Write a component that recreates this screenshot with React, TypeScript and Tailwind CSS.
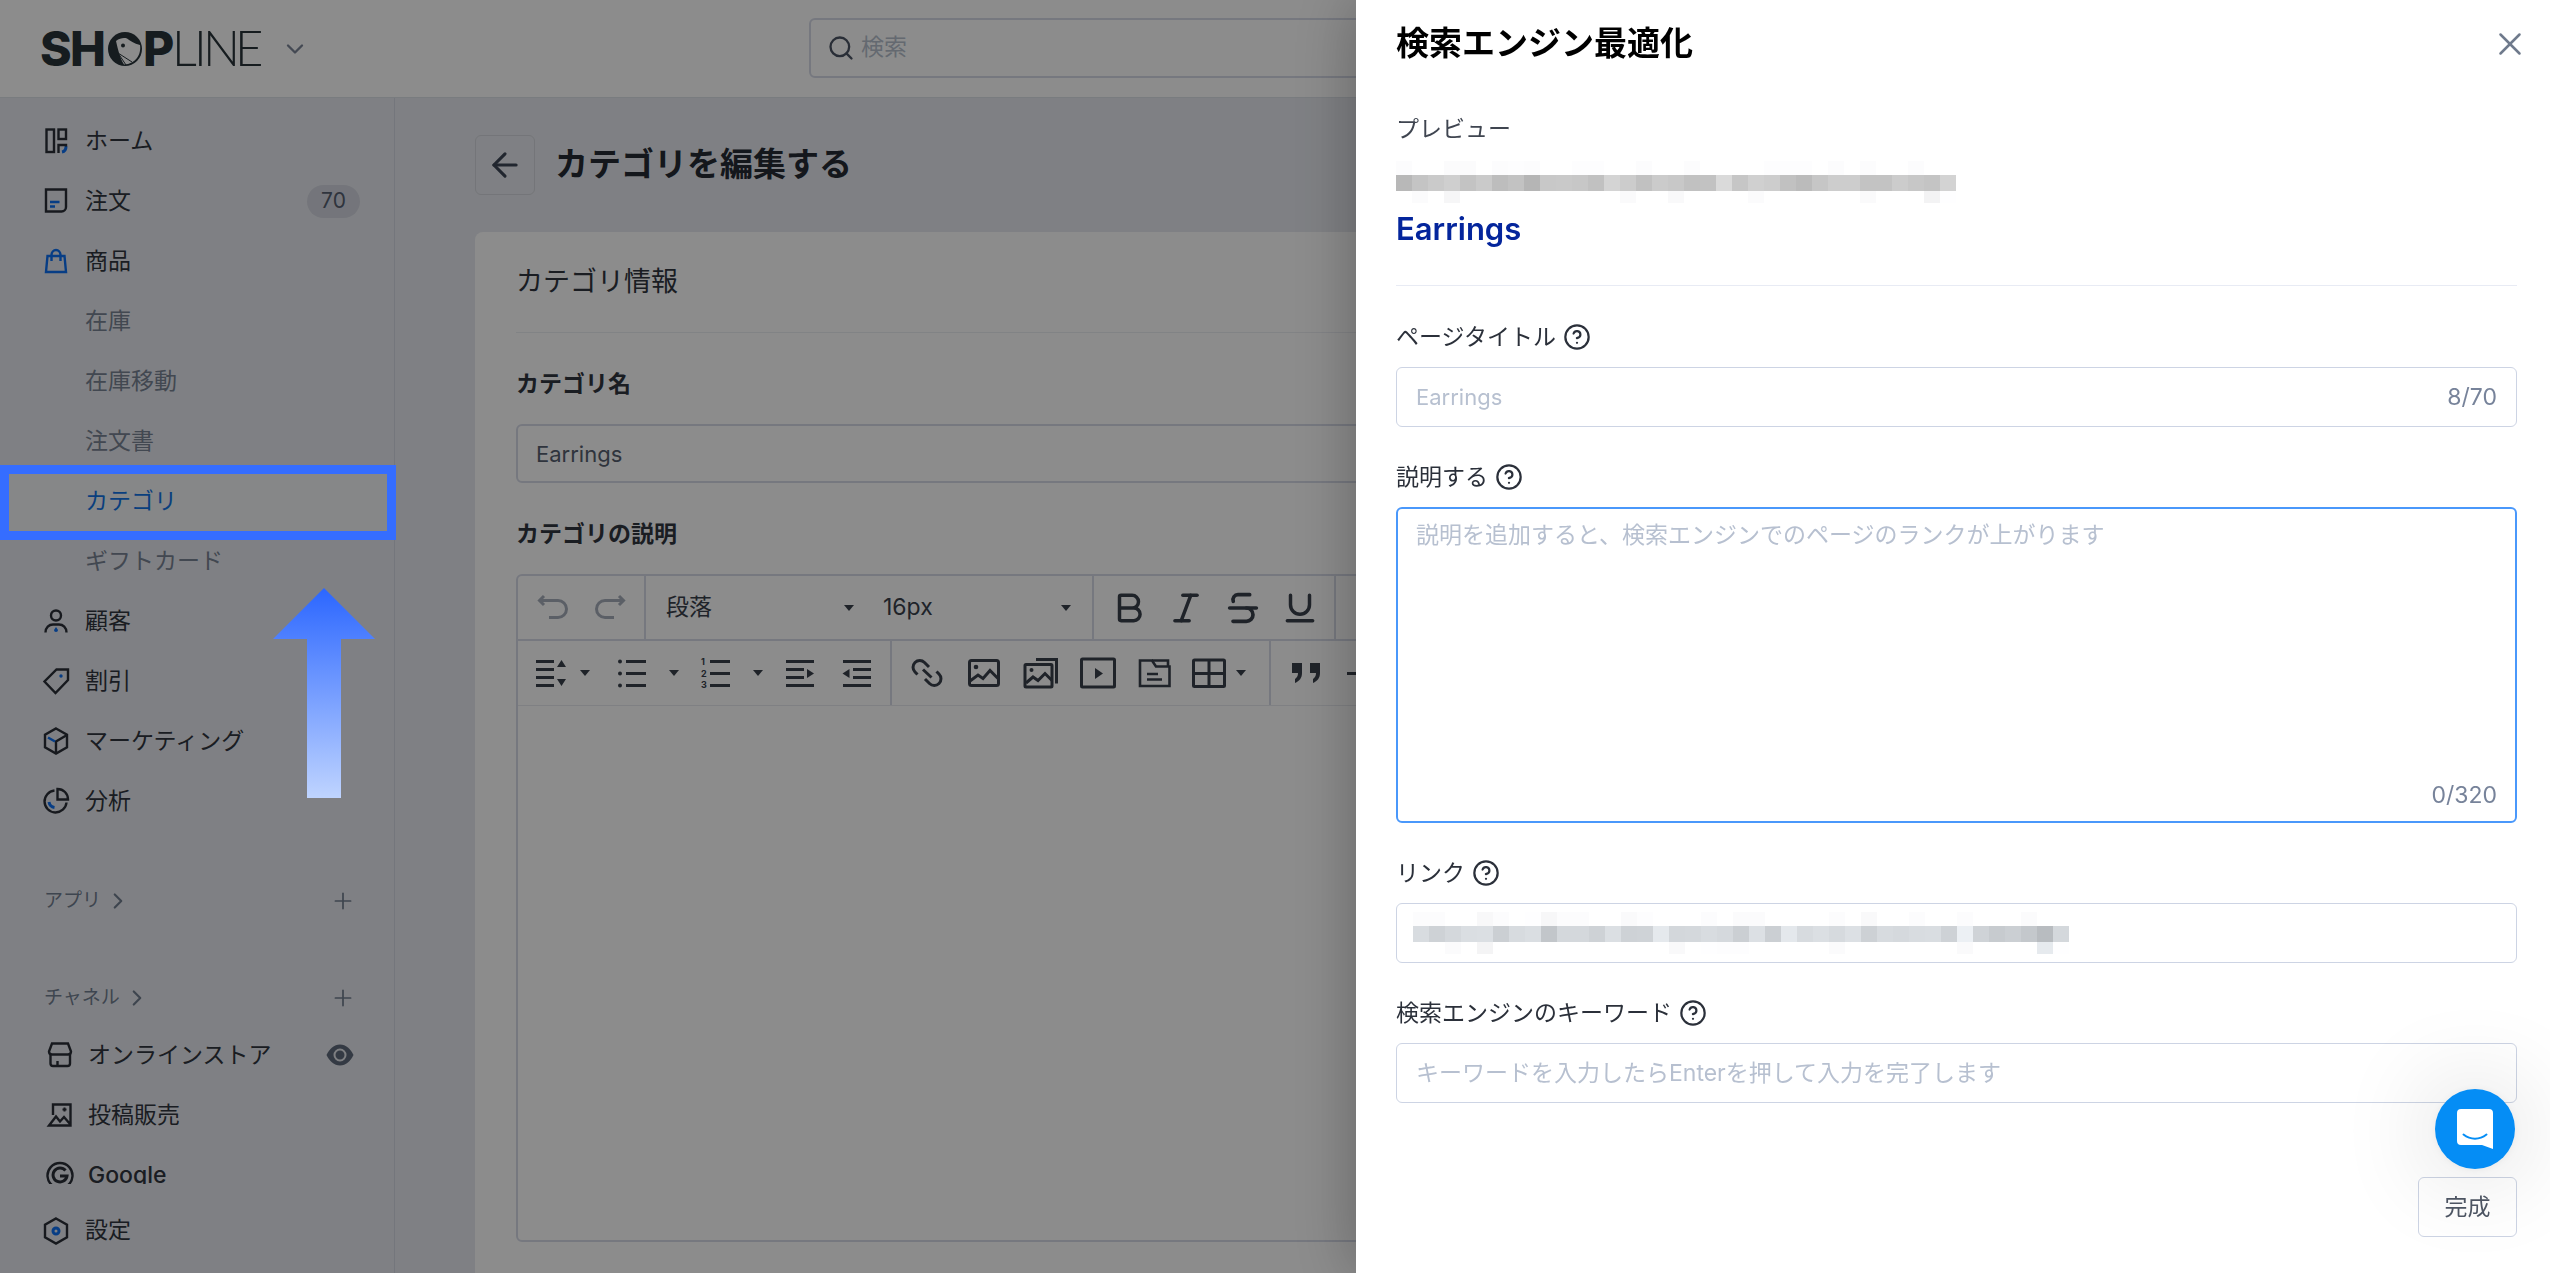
import { useState } from 'react';
import type { ReactNode } from 'react';
import {
  ArrowLeft,
  Bold,
  ChevronDown,
  ChevronRight,
  HelpCircle,
  Italic,
  Plus,
  Search,
  Strikethrough,
  Underline,
  X,
} from 'lucide-react';

const INK = '#2a2f38';
const BLUE = '#0d70f2';

/* ---------- Sidebar icons ---------- */

function NavSvg({ children, stroke = INK }: { children: ReactNode; stroke?: string }) {
  return (
    <svg width="28" height="28" viewBox="0 0 28 28" fill="none" stroke={stroke} strokeWidth="2.4" className="shrink-0">
      {children}
    </svg>
  );
}

const HomeIcon = () => (
  <NavSvg>
    <rect x="4.5" y="2.5" width="7.5" height="22.5" />
    <rect x="16.5" y="2.5" width="7.5" height="9.5" />
    <path d="M16.5 26v-8H24v2" />
    <path d="M24 19.5c0 3.5-1.5 5-4 5.5" stroke={BLUE} strokeWidth="3" />
  </NavSvg>
);

const OrderIcon = () => (
  <NavSvg>
    <path d="M4 2.5h20V20a4.5 4.5 0 0 1-4.5 4.5H4z" />
    <path d="M8 15h9.5M8 19.5h5" stroke={BLUE} />
  </NavSvg>
);

const BagIcon = () => (
  <NavSvg stroke={BLUE}>
    <path d="M5.5 9h17L24 25H4z" />
    <path d="M9.5 14V8a4.5 5 0 0 1 9 0v6" />
  </NavSvg>
);

const CustomerIcon = () => (
  <NavSvg>
    <circle cx="14" cy="8.5" r="5" />
    <path d="M3.5 25.5c0-5 3.5-8 7.5-8h6c4 0 7.5 3 7.5 8" />
    <path d="M14 20l2 3a2 2 0 1 1-4 0z" fill={BLUE} stroke="none" />
  </NavSvg>
);

const TagIcon = () => (
  <NavSvg>
    <path d="M14.5 2.5H26V13L13.5 26l-11-11.5z" />
    <circle cx="19" cy="9" r="1.7" fill={BLUE} stroke="none" />
  </NavSvg>
);

const CubeIcon = () => (
  <NavSvg>
    <path d="M14 1.5l11 6.2v12.6l-11 6.2-11-6.2V7.7z" />
    <path d="M14 26.5v-12L25 8" />
    <path d="M6 10.5l7 4" stroke={BLUE} />
  </NavSvg>
);

const ChartIcon = () => (
  <NavSvg>
    <path d="M12.5 3.5a11 11 0 1 0 12 12" />
    <path d="M15.5 2v10.5H26C26 6.5 21.5 2 15.5 2z" />
    <path d="M7 15c.5 3 2.5 5 5.5 5.5" stroke={BLUE} strokeWidth="3" />
  </NavSvg>
);

const SettingsIcon = () => (
  <NavSvg>
    <path d="M14 1.5l11 6.2v12.6l-11 6.2-11-6.2V7.7z" />
    <circle cx="14" cy="14" r="3" stroke={BLUE} strokeWidth="3" />
  </NavSvg>
);

const StoreIcon = () => (
  <NavSvg>
    <path d="M6 2.5h16l3 8c0 2-1.5 3-3 3H6c-1.500 0-3-1-3-3z" />
    <path d="M4.5 13v9.500a2.500 2.500 0 0 0 2.500 2.500h14.500a2.500 2.500 0 0 0 2.500-2.500V13M11.5 25v-5" />
  </NavSvg>
);

const PostIcon = () => (
  <NavSvg>
    <path d="M7 14V3.500h17.500v21H3l7-9 4 5 4-4.500 6 7" />
    <path d="M18.5 6.500v4M16.500 8.500h4" strokeWidth="2" />
  </NavSvg>
);

const GoogleIcon = () => (
  <NavSvg>
    <path d="M6.5 24.5a12.5 12.5 0 1 1 15 0" />
    <path d="M19.5 9.5a7 7 0 1 0 1.5 5.5h-7" strokeWidth="3" />
  </NavSvg>
);

const EyeIcon = () => (
  <svg width="28" height="22" viewBox="0 0 28 22">
    <path d="M14 .5c6 0 10.5 4.5 13.5 10.5C24.5 17 20 21.5 14 21.5S3.500 17 .5 11C3.500 5 8 .5 14 .5z" fill="#606b7c" />
    <circle cx="14" cy="11" r="5.5" fill="none" stroke="#e6e8ed" strokeWidth="2" />
  </svg>
);

/* ---------- Editor icons ---------- */

function ToolSvg({ children }: { children: ReactNode }) {
  return (
    <svg width="36" height="32" viewBox="0 0 36 32" fill="none" stroke="currentColor" strokeWidth="3" className="shrink-0">
      {children}
    </svg>
  );
}

const UndoIcon = () => (
  <ToolSvg>
    <path d="M9 4 4.5 8.5 9 13M5 8.5h18a8.5 8.5 0 0 1 0 17h-9" />
  </ToolSvg>
);

const RedoIcon = () => (
  <ToolSvg>
    <path d="M27 4l4.5 4.5L27 13M31 8.5H13a8.5 8.5 0 0 0 0 17h9" />
  </ToolSvg>
);

const LineHeightIcon = () => (
  <ToolSvg>
    <path d="M3 4.5h18M3 12.5h18M3 20.5h18M3 28.5h18" />
    <path d="M24 10h9l-4.5-7zM24 22h9l-4.5 7z" fill="currentColor" stroke="none" />
  </ToolSvg>
);

const BulletIcon = () => (
  <ToolSvg>
    <path d="M12 4.5h20M12 16.5h20M12 28.5h20" />
    <g fill="currentColor" stroke="none">
      <circle cx="6" cy="4.5" r="2" />
      <circle cx="6" cy="16.5" r="2" />
      <circle cx="6" cy="28.5" r="2" />
    </g>
  </ToolSvg>
);

const NumberedIcon = () => (
  <ToolSvg>
    <path d="M12 4.5h20M12 16.5h20M12 28.5h20" />
    <g fill="currentColor" stroke="none" fontSize="9" fontWeight="700">
      <text x="3" y="8">1</text>
      <text x="3" y="20">2</text>
      <text x="3" y="31">3</text>
    </g>
  </ToolSvg>
);

const IndentIcon = () => (
  <ToolSvg>
    <path d="M4 4.5h28M4 12.5h18M4 20.5h18M4 28.5h28" />
    <path d="M25 12v9l7-4.5z" fill="currentColor" stroke="none" />
  </ToolSvg>
);

const OutdentIcon = () => (
  <ToolSvg>
    <path d="M4 4.5h28M14 12.5h18M14 20.5h18M4 28.5h28" />
    <path d="M10.5 12v9l-7-4.5z" fill="currentColor" stroke="none" />
  </ToolSvg>
);

const LinkIcon = () => (
  <ToolSvg>
    <path d="M8.5 17.5 6 15a6.5 6.5 0 0 1 9.5-9.5L20 10M14 12.5l8.5 8M27.5 14.5 30 17a6.5 6.5 0 0 1-9.5 9.5L16 22" />
  </ToolSvg>
);

const ImageIcon = () => (
  <ToolSvg>
    <rect x="3.5" y="3.5" width="29" height="25" rx="2" />
    <path d="M4 24l8-6 5 3.5 7-8 8 8" />
    <circle cx="10" cy="10" r="2.3" fill="currentColor" stroke="none" />
  </ToolSvg>
);

const GalleryIcon = () => (
  <ToolSvg>
    <rect x="2" y="7.5" width="27" height="22.5" rx="1" />
    <path d="M3 26l7-6 5 3.5 7-7 7 7M13 2.5h20.5v24" />
    <circle cx="8.5" cy="13" r="2" fill="currentColor" stroke="none" />
  </ToolSvg>
);

const VideoIcon = () => (
  <ToolSvg>
    <rect x="1.5" y="2" width="33" height="28" rx="1" />
    <path d="M15 11v11l8-5.5z" fill="currentColor" stroke="none" />
  </ToolSvg>
);

const DocIcon = () => (
  <ToolSvg>
    <path d="M3 3.500h12l4 6h13.500V29H3z" strokeWidth="2.600" />
    <path d="M15 3.500h16V9M10 17h11M10 22.500h15" strokeWidth="2.600" />
  </ToolSvg>
);

const TableIcon = () => (
  <ToolSvg>
    <rect x="2.5" y="3" width="31" height="26.5" rx="1" />
    <path d="M18 3v27M2.5 16.5h31" />
  </ToolSvg>
);

const QuoteIcon = () => (
  <ToolSvg>
    <path
      d="M4 6h10v10c0 5-2.5 8-7 10v-4c2-1.5 3-3 3-6H4zM22 6h10v10c0 5-2.5 8-7 10v-4c2-1.5 3-3 3-6h-6z"
      fill="currentColor"
      stroke="none"
    />
  </ToolSvg>
);

const MinusIcon = () => (
  <ToolSvg>
    <path d="M2 16.5h32" />
  </ToolSvg>
);

const Caret = () => (
  <svg width="10" height="6" viewBox="0 0 10 6" className="shrink-0">
    <path d="M0 0h10L5 6z" fill="#3a414c" />
  </svg>
);

function Tool({ label, children, size = 'w-[57px]' }: { label: string; children: ReactNode; size?: string }) {
  return (
    <button type="button" aria-label={label} className={`${size} h-full flex items-center justify-center`}>
      {children}
    </button>
  );
}

/* ---------- Data ---------- */

interface NavEntry {
  name: string;
  icon?: () => ReactNode;
  badge?: string;
  active?: boolean;
}

const navEntries: NavEntry[] = [
  { name: 'ホーム', icon: HomeIcon },
  { name: '注文', icon: OrderIcon, badge: '70' },
  { name: '商品', icon: BagIcon },
  { name: '在庫' },
  { name: '在庫移動' },
  { name: '注文書' },
  { name: 'カテゴリ', active: true },
  { name: 'ギフトカード' },
  { name: '顧客', icon: CustomerIcon },
  { name: '割引', icon: TagIcon },
  { name: 'マーケティング', icon: CubeIcon },
  { name: '分析', icon: ChartIcon },
];

const channels = [
  { name: 'オンラインストア', icon: StoreIcon, eye: true },
  { name: '投稿販売', icon: PostIcon },
  { name: 'Google', icon: GoogleIcon, latin: true },
];

// Gray levels of the pixelated texts, one cell each: top, middle and bottom strip
const previewCells = {
  top: [252, 255, 255, 251, 251, 255, 252, 253, 252, 255, 255, 253, 253, 255, 255, 252, 255, 255, 252, 255, 255, 255, 255, 253, 253, 253, 255, 252, 255, 252, 255, 255, 252, 255, 255],
  mid: [184, 196, 202, 207, 195, 202, 189, 194, 181, 200, 201, 199, 193, 212, 204, 193, 203, 200, 193, 194, 218, 198, 208, 205, 193, 187, 198, 205, 205, 195, 195, 204, 199, 196, 211],
  bottom: [255, 251, 255, 246, 255, 255, 255, 255, 255, 255, 255, 255, 255, 255, 250, 255, 255, 249, 255, 255, 255, 255, 251, 255, 255, 255, 255, 255, 255, 250, 255, 255, 255, 243, 254],
};

const linkCells = {
  top: [252, 252, 255, 255, 248, 252, 255, 254, 247, 252, 252, 255, 255, 250, 253, 255, 255, 255, 252, 255, 251, 251, 255, 255, 255, 255, 252, 255, 249, 255, 255, 252, 255, 255, 252, 255, 255, 255, 251, 255, 255],
  mid: [216, 206, 212, 218, 219, 203, 215, 218, 194, 212, 212, 206, 219, 206, 207, 229, 211, 212, 216, 213, 203, 220, 203, 228, 215, 219, 214, 220, 205, 215, 213, 216, 217, 206, 236, 207, 199, 203, 196, 184, 212],
  bottom: [255, 255, 251, 255, 244, 255, 255, 255, 255, 255, 255, 255, 255, 255, 255, 255, 249, 255, 254, 253, 253, 255, 255, 255, 255, 255, 251, 255, 255, 255, 255, 255, 255, 255, 250, 255, 255, 255, 255, 230, 254],
};

function Mosaic({ cells, tint = 0 }: { cells: { top: number[]; mid: number[]; bottom: number[] }; tint?: number }) {
  const strips = [
    { values: cells.top, y: 0, height: 14 },
    { values: cells.mid, y: 14, height: 16 },
    { values: cells.bottom, y: 30, height: 12 },
  ];
  return (
    <svg width={cells.mid.length * 16} height="42" shapeRendering="crispEdges" aria-hidden="true">
      {strips.map((strip) =>
        strip.values.map((v, i) => (
          <rect
            key={`${strip.y}-${i}`}
            x={i * 16}
            y={strip.y}
            width="16"
            height={strip.height}
            fill={`rgb(${v}, ${Math.min(255, v + (v < 240 ? tint / 2 : 0))}, ${Math.min(255, v + (v < 240 ? tint : 1))})`}
          />
        ))
      )}
    </svg>
  );
}

/* ---------- Page parts ---------- */

function Logo() {
  return (
    <svg width="232" height="80" viewBox="-4 -18 232 80" role="img" aria-label="SHOPLINE" fill="#28343a">
      <g fontFamily="Inter" fontSize="48" fontWeight="800">
        <text x="-1" y="39">S</text>
        <text x="29" y="39">H</text>
        <text x="102" y="39">P</text>
      </g>
      <g fontFamily="Lato" fontSize="49" fontWeight="300">
        <text x="131" y="39">L</text>
        <text x="153" y="39">I</text>
        <text x="162" y="39">N</text>
        <text x="194" y="39">E</text>
      </g>
      <circle cx="84" cy="22" r="17" />
      <path d="M75 14c4-3 8-3.5 11-2.5 3 2 7 5 13 6.5 1.5 9-4 19-16 19.5-4-6-6-15-8-23.5z" fill="#fff" />
      <circle cx="82" cy="18.5" r="2" />
      <path d="M77 26l14 9M77 26l8 12M78 29l3 9" stroke="#28343a" strokeWidth="1" />
    </svg>
  );
}

function Header() {
  return (
    <header className="h-[98px] shrink-0 grid grid-cols-[1fr_932px_1fr] items-center bg-white border-b border-[#dde2e8]">
      <button type="button" className="pl-[37px] flex items-center gap-3">
        <Logo />
        <ChevronDown size={28} strokeWidth={2} className="text-[#7c8698]" />
      </button>
      <label className="h-[60px] mb-0.5 px-4 flex items-center gap-1.5 rounded-md border-2 border-[#d7dbe8]">
        <Search size={28} strokeWidth={2} className="text-[#4c5565]" />
        <input
          type="search"
          placeholder="検索"
          aria-label="検索"
          className="flex-1 text-[23px] outline-none placeholder:text-[#b7bfcd]"
        />
      </label>
    </header>
  );
}

function SectionHeading({ name }: { name: string }) {
  return (
    <div className="mt-[43px] h-[54px] pl-11 pr-[38px] flex items-center justify-between text-[#727e90]">
      <a href="#" className="flex items-center gap-1 text-[19px]">
        {name}
        <ChevronRight size={26} strokeWidth={2} />
      </a>
      <button type="button" aria-label={`${name}を追加`}>
        <Plus size={26} strokeWidth={1.6} />
      </button>
    </div>
  );
}

function Sidebar() {
  return (
    <aside className="w-[395px] shrink-0 flex flex-col border-r border-[#d3d8e2] text-[23px] text-[#31363f]">
      <nav className="flex-1 min-h-0 pt-[13px] overflow-hidden">
        {navEntries.map((entry) => (
          <a
            key={entry.name}
            href="#"
            className={`h-[60px] pr-[34px] flex items-center ${entry.icon ? 'pl-[42px] gap-[15px]' : 'pl-[85px]'} ${
              entry.active ? 'bg-[#f4f6f7] text-[#1273e6]' : entry.icon ? '' : 'text-[#788394]'
            }`}
          >
            {entry.icon && <entry.icon />}
            {entry.name}
            {entry.badge && (
              <span className="ml-auto w-[53px] h-[33px] rounded-full bg-[#d3d6e0] text-[#566070] text-[21px] flex items-center justify-center">
                {entry.badge}
              </span>
            )}
          </a>
        ))}
        <SectionHeading name="アプリ" />
        <SectionHeading name="チャネル" />
        {channels.map((channel) => (
          <a key={channel.name} href="#" className="h-[60px] pl-[46px] pr-10 flex items-center gap-[14px]">
            <channel.icon />
            <span className={channel.latin ? 'font-medium' : ''}>{channel.name}</span>
            {channel.eye && (
              <span className="ml-auto">
                <EyeIcon />
              </span>
            )}
          </a>
        ))}
      </nav>
      <a href="#" className="h-[89px] pt-1 pl-[42px] flex items-center gap-[15px]">
        <SettingsIcon />
        設定
      </a>
    </aside>
  );
}

function Editor() {
  return (
    <div className="flex flex-col h-[668px] rounded-md border-2 border-[#d7dbe8] text-[#3a414c]">
      <div className="h-[65px] shrink-0 flex border-b-2 border-[#d7dbe8] overflow-hidden">
        <div className="w-32 shrink-0 flex justify-center border-r-2 border-[#d7dbe8] text-[#a7aebb]">
          <Tool label="元に戻す"><UndoIcon /></Tool>
          <Tool label="やり直す"><RedoIcon /></Tool>
        </div>
        <div className="pr-[21px] shrink-0 flex gap-[9px] border-r-2 border-[#d7dbe8] text-[23px]">
          <div className="w-[208px] pl-5 flex items-center">
            <select aria-label="書式" className="flex-1 appearance-none outline-none">
              <option>段落</option>
            </select>
            <Caret />
          </div>
          <div className="w-[208px] pl-5 flex items-center">
            <select aria-label="文字サイズ" className="flex-1 appearance-none outline-none">
              <option>16px</option>
            </select>
            <Caret />
          </div>
        </div>
        <div className="px-1.5 shrink-0 flex border-r-2 border-[#d7dbe8]">
          <Tool label="太字"><Bold size={38} strokeWidth={2.2} /></Tool>
          <Tool label="斜体"><Italic size={38} strokeWidth={2.2} /></Tool>
          <Tool label="取り消し線"><Strikethrough size={40} strokeWidth={2.2} /></Tool>
          <Tool label="下線"><Underline size={38} strokeWidth={2.2} /></Tool>
        </div>
      </div>
      <div className="h-[65px] shrink-0 flex border-b border-[#e8eaef] overflow-hidden">
        <div className="pl-[5px] pr-[5px] shrink-0 flex border-r-2 border-[#d7dbe8]">
          <Tool label="行の高さ" size="w-[56px]"><LineHeightIcon /></Tool>
          <Tool label="行の高さを選択" size="w-3 mr-3"><Caret /></Tool>
          <Tool label="箇条書き"><BulletIcon /></Tool>
          <Tool label="箇条書きを選択" size="w-[27px]"><Caret /></Tool>
          <Tool label="番号付き"><NumberedIcon /></Tool>
          <Tool label="番号付きを選択" size="w-[27px]"><Caret /></Tool>
          <Tool label="インデント"><IndentIcon /></Tool>
          <Tool label="インデント解除"><OutdentIcon /></Tool>
        </div>
        <div className="pl-1.5 pr-[22px] shrink-0 flex border-r-2 border-[#d7dbe8]">
          <Tool label="リンク"><LinkIcon /></Tool>
          <Tool label="画像"><ImageIcon /></Tool>
          <Tool label="ギャラリー"><GalleryIcon /></Tool>
          <Tool label="動画"><VideoIcon /></Tool>
          <Tool label="ファイル"><DocIcon /></Tool>
          <Tool label="表" size="w-[52px]"><TableIcon /></Tool>
          <Tool label="表を選択" size="w-3"><Caret /></Tool>
        </div>
        <div className="pl-1.5 shrink-0 flex">
          <Tool label="引用"><QuoteIcon /></Tool>
          <Tool label="区切り線"><MinusIcon /></Tool>
        </div>
      </div>
      <textarea aria-labelledby="category-body" className="flex-1 p-5 resize-none outline-none text-[23px]" />
    </div>
  );
}

function CategoryPage() {
  const [name, setName] = useState('Earrings');

  return (
    <main className="flex-1 min-w-0 px-20 pt-[37px] overflow-hidden">
      <div className="flex items-center gap-5">
        <button
          type="button"
          aria-label="戻る"
          className="w-[60px] h-[60px] flex items-center justify-center rounded-md border border-[#d3d6dc] text-[#3d4656]"
        >
          <ArrowLeft size={38} strokeWidth={2} />
        </button>
        <h1 className="text-[33px] font-bold text-[#262b33]">カテゴリを編集する</h1>
      </div>

      <section className="mt-[37px] px-[41px] pb-[60px] rounded-lg bg-white">
        <h2 className="h-[101px] flex items-center border-b border-[#eceef3] text-[27px] text-[#31363f]">カテゴリ情報</h2>
        <label htmlFor="category-name" className="mt-[35px] block text-[23px] leading-8 font-bold text-[#31363f]">
          カテゴリ名
        </label>
        <input
          id="category-name"
          value={name}
          onChange={(e) => setName(e.target.value)}
          className="mt-6 w-full h-[59px] px-[18px] rounded-md border-2 border-[#d7dbe8] text-[22px] text-[#566070] outline-none"
        />
        <h3 id="category-body" className="mt-[35px] mb-6 text-[23px] leading-8 font-bold text-[#31363f]">
          カテゴリの説明
        </h3>
        <Editor />
      </section>
    </main>
  );
}

function FieldLabel({ htmlFor, children }: { htmlFor: string; children: ReactNode }) {
  return (
    <label htmlFor={htmlFor} className="mb-[14px] h-8 flex items-center gap-[7px] text-[23px] text-[#2b303a]">
      {children}
      <HelpCircle size={28} strokeWidth={1.9} />
    </label>
  );
}

function SeoDrawer() {
  const [title, setTitle] = useState('');
  const [description, setDescription] = useState('');

  return (
    <div
      role="dialog"
      aria-labelledby="seo-title"
      className="fixed inset-y-0 right-0 z-30 w-[1194px] max-w-full pl-10 pr-[33px] pb-9 flex flex-col bg-white shadow-[0_0_60px_rgba(0,0,0,0.3)] text-[23px]"
    >
      <div className="h-[88px] shrink-0 flex items-center justify-between">
        <h2 id="seo-title" className="text-[33px] font-bold text-black">検索エンジン最適化</h2>
        <button type="button" aria-label="閉じる" className="-mr-3 text-[#6f7a8c]">
          <X size={38} strokeWidth={1.6} />
        </button>
      </div>

      <div className="pt-[25px] pb-8 border-b border-[#e8ebf4]">
        <p className="mb-4 leading-8 text-[#3f4550]">プレビュー</p>
        <Mosaic cells={previewCells} />
        <p className="mt-0.5 text-[31px] leading-[48px] font-semibold text-[#04259c]">Earrings</p>
      </div>

      <div className="pt-[35px] flex flex-col gap-[34px]">
        <div>
          <FieldLabel htmlFor="page-title">ページタイトル</FieldLabel>
          <div className="h-[60px] px-[19px] flex items-center rounded-md border border-[#cdd4e4]">
            <input
              id="page-title"
              value={title}
              onChange={(e) => setTitle(e.target.value)}
              placeholder="Earrings"
              className="flex-1 text-[22px] outline-none placeholder:text-[#b7c0d0]"
            />
            <span className="text-[#77839a]">8/70</span>
          </div>
        </div>
        <div>
          <FieldLabel htmlFor="description">説明する</FieldLabel>
          <div className="h-[316px] px-[18px] py-2.5 flex flex-col rounded-md border-2 border-[#4a98fb]">
            <textarea
              id="description"
              value={description}
              onChange={(e) => setDescription(e.target.value)}
              placeholder="説明を追加すると、検索エンジンでのページのランクが上がります"
              className="flex-1 resize-none leading-8 outline-none placeholder:text-[#b7c0d0]"
            />
            <span className="self-end leading-8 text-[#77839a]">{description.length}/320</span>
          </div>
        </div>
        <div>
          <FieldLabel htmlFor="link">リンク</FieldLabel>
          <div className="h-[60px] px-4 flex items-center rounded-md border border-[#cdd4e4]">
            <Mosaic cells={linkCells} tint={8} />
            <input id="link" className="flex-1 outline-none" />
          </div>
        </div>
        <div>
          <FieldLabel htmlFor="keywords">検索エンジンのキーワード</FieldLabel>
          <input
            id="keywords"
            placeholder="キーワードを入力したらEnterを押して入力を完了します"
            className="w-full h-[60px] px-[19px] rounded-md border border-[#cdd4e4] outline-none placeholder:text-[#b7c0d0]"
          />
        </div>
      </div>

      <button
        type="button"
        className="mt-auto self-end w-[99px] h-[60px] shrink-0 rounded-md border border-[#cdd4e4] text-[#4f5765]"
      >
        完成
      </button>
    </div>
  );
}

function ChatButton() {
  return (
    <button
      type="button"
      aria-label="チャット"
      className="fixed right-[35px] bottom-[104px] z-40 w-20 h-20 rounded-full flex items-center justify-center bg-[#058df5] shadow-[0_2px_100px_rgba(0,0,0,0.2),0_1px_10px_rgba(0,0,0,0.06)]"
    >
      <svg width="36" height="40" viewBox="0 0 36 40">
        <path d="M4 0h28a4 4 0 0 1 4 4v36l-11-4H4a4 4 0 0 1-4-4V4a4 4 0 0 1 4-4z" fill="#fff" />
        <path d="M6.5 25.5c7 5.5 16 5.5 23 0" fill="none" stroke="#058df5" strokeWidth="2" strokeLinecap="round" />
      </svg>
    </button>
  );
}

// Tutorial marks drawn over the dimmed page
function Annotations() {
  return (
    <>
      <div className="absolute left-0 top-[465px] z-20 w-[396px] h-[75px] border-[9px] border-[#356dff]" />
      <svg width="102" height="210" viewBox="0 0 102 210" className="absolute left-[273px] top-[588px] z-20">
        <defs>
          <linearGradient id="arrow" x1="0" y1="0" x2="0" y2="1">
            <stop offset="0" stopColor="#2b66ff" />
            <stop offset="1" stopColor="#bfd4ff" />
          </linearGradient>
        </defs>
        <path d="M51 0l51 51H68v159H34V51H0z" fill="url(#arrow)" />
      </svg>
    </>
  );
}

export default function App() {
  return (
    <div className="relative h-screen flex flex-col overflow-hidden bg-[#e8eaf0] font-['Inter','Noto_Sans_CJK_JP',sans-serif]">
      <Header />
      <div className="flex-1 min-h-0 flex">
        <Sidebar />
        <CategoryPage />
      </div>
      <div className="fixed inset-0 z-10 bg-black/45" />
      <Annotations />
      <SeoDrawer />
      <ChatButton />
    </div>
  );
}
